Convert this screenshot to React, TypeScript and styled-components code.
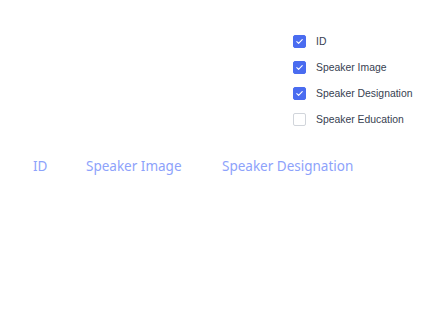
import styled, { createGlobalStyle } from "styled-components";

const GlobalStyle = createGlobalStyle`
  body {
    margin: 0;
    background: #ffffff;
    font-family: Inter, "Noto Sans", sans-serif;
  }
`;

const Page = styled.div`
  width: 437px;
  height: 321px;
  background: #fff;
`;

const Menu = styled.div`
  display: flex;
  flex-direction: column;
  gap: 10px;
  padding: 33px 0 0 293px;
`;

const Option = styled.label`
  display: flex;
  align-items: center;
  gap: 10px;
  height: 16px;
  font-family: "Liberation Sans", Arial, sans-serif;
  font-size: 10.4px;
  color: #374151;
`;

const Box = styled.span<{ $checked: boolean }>`
  width: 13px;
  height: 13px;
  box-sizing: border-box;
  border-radius: 2px;
  display: flex;
  align-items: center;
  justify-content: center;
  background: ${p => (p.$checked ? "#4a6cf0" : "#fff")};
  border: 1px solid ${p => (p.$checked ? "#4a6cf0" : "#d1d5db")};
`;

const HeaderRow = styled.div`
  display: flex;
  padding: 30px 0 0 33px;
  font-family: "Noto Sans", sans-serif;
  font-size: 13.5px;
  font-weight: 400;
  color: #8da2fb;
`;

const HeadCell = styled.div<{ $w: number }>`
  width: ${p => p.$w}px;
`;

const options = [
  { label: "ID", checked: true },
  { label: "Speaker Image", checked: true },
  { label: "Speaker Designation", checked: true },
  { label: "Speaker Education", checked: false },
];

function Check() {
  return (
    <svg width="9" height="9" viewBox="0 0 10 10" fill="none">
      <path d="M2 5.2l2 2L8 2.8" stroke="#fff" strokeWidth="1.2" strokeLinecap="round" strokeLinejoin="round" />
    </svg>
  );
}

export default function App() {
  return (
    <Page>
      <GlobalStyle />
      <Menu>
        {options.map(o => (
          <Option key={o.label}>
            <Box $checked={o.checked}>{o.checked && <Check />}</Box>
            {o.label}
          </Option>
        ))}
      </Menu>
      <HeaderRow>
        <HeadCell $w={53}>ID</HeadCell>
        <HeadCell $w={136}>Speaker Image</HeadCell>
        <HeadCell $w={150}>Speaker Designation</HeadCell>
      </HeaderRow>
    </Page>
  );
}
